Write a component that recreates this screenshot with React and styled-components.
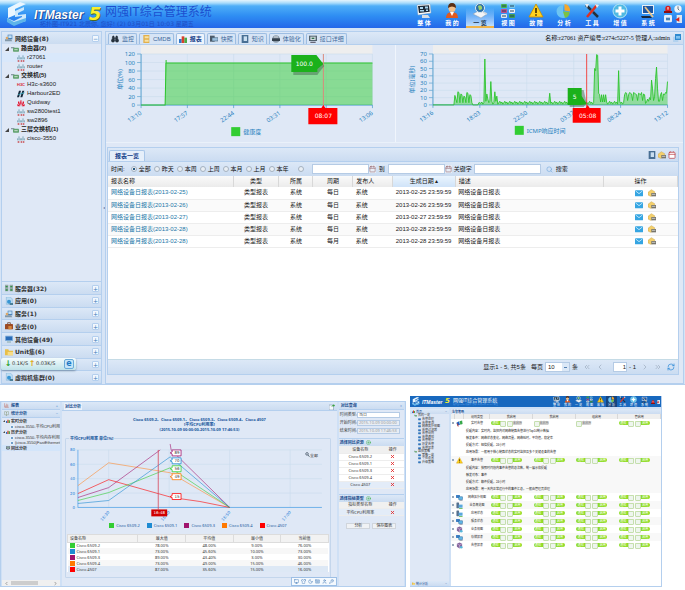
import React from "react";
import styled, { createGlobalStyle, css } from "styled-components";
import {
  Binoculars,
  BookOpen,
  Calendar,
  ChartColumn,
  ChevronLeft,
  ChevronRight,
  ChevronsLeft,
  ChevronsRight,
  CirclePlus,
  Keyboard,
  Monitor,
  Moon,
  RefreshCw,
  Search,
  Shirt,
  User,
  Wrench,
  X,
} from "lucide-react";

const devices = [
  { name: "路由器(2)", group: true },
  { name: "r27061", brand: "cisco", selected: true },
  { name: "router", brand: "cisco" },
  { name: "交换机(5)", group: true },
  { name: "H3c-s3600", brand: "h3c" },
  { name: "Harbour2ED", brand: "harbour" },
  { name: "Quidway", brand: "huawei" },
  { name: "sw2800test1", brand: "cisco" },
  { name: "sw2896", brand: "cisco" },
  { name: "三层交换机(1)", group: true },
  { name: "cisco-3550", brand: "cisco" },
];

const categories = [
  ["服务器(32)", "server"],
  ["应用(0)", "app"],
  ["服务(1)", "service"],
  ["业务(0)", "case"],
  ["其他设备(49)", "screen"],
  ["Unit集(6)", "folder"],
  ["", "folder"],
  ["虚拟机集群(0)", "app"],
];

const navItems = [
  ["整 体", "overall"],
  ["我 的", "mine"],
  ["一 览", "list"],
  ["视 图", "view"],
  ["故 障", "fault"],
  ["分 析", "analysis"],
  ["工 具", "tools"],
  ["增 值", "plus"],
  ["系 统", "system"],
];

const tabs = [
  ["监控", "watch"],
  ["CMDB", "book"],
  ["报表", "chart"],
  ["快照", "camera"],
  ["知识", "note"],
  ["体验化", "globe"],
  ["接口详细", "port"],
];

const reports = [
  ["网络设备日报表(2013-02-25)", "每日", "2013-02-25 23:59:59", "网络设备日报表"],
  ["网络设备日报表(2013-02-26)", "每日", "2013-02-26 23:59:59", "网络设备日报表"],
  ["网络设备日报表(2013-02-27)", "每日", "2013-02-27 23:59:59", "网络设备日报表"],
  ["网络设备日报表(2013-02-28)", "每日", "2013-02-28 23:59:59", "网络设备日报表"],
  ["网络设备月报表(2013-02-28)", "每月", "2013-02-28 23:59:59", "网络设备月报表"],
];

const ranges = ["全部", "昨天", "本周", "上周", "本月", "上月", "本年"];

const series = [
  { name: "Cisco 6509-2", color: "#32cd32", values: ["78.00%", "48.00%", "9.00%", "76.00%"] },
  { name: "Cisco 6509-1", color: "#1e8bd2", values: ["73.00%", "45.60%", "10.00%", "73.00%"] },
  { name: "Cisco 6509-3", color: "#a0146e", values: ["89.00%", "43.40%", "3.00%", "30.00%"] },
  { name: "Cisco 6509-4", color: "#ff7800", values: ["73.00%", "49.00%", "15.00%", "46.00%"] },
  { name: "Cisco 4507", color: "#ff0000", values: ["87.00%", "35.60%", "15.00%", "16.00%"] },
];

const alarmTree = [
  ["我的一览", 1],
  ["告警处理", 2],
  ["告警查询", 2],
  ["网络拓扑视图", 2],
  ["告警过滤器", 2],
  ["告警规则", 2],
  ["告警通知", 2],
  ["告警统计", 2],
  ["历史告警", 2],
  ["告警报表", 2],
  ["监控策略", 1],
  ["策略一览", 2],
  ["个性设置", 2],
  ["升级策略", 2],
];

const alarms = [
  {
    name: "实时告警",
    icon: "flag",
    toggles: ["gd", "d", "d", "gg"],
    lines: [
      "提醒内容：实时内，监控内对网络链路告警进行Top10统计数据",
      "触发条件：网络状态变化，网络流量，网络延时，平均值，稳定率",
      "提醒方式：短信提醒，24小时",
      "应用场景：一般用于核心链路状态的实时监控及多个关键设备的告警",
    ],
  },
  {
    name: "事件告警",
    icon: "fault",
    toggles: ["gg", "gg", "gg", "gg"],
    lines: [
      "提醒内容：按照时间段内事件告警的总次数，统一展示和提醒",
      "触发对象：事件",
      "提醒方式：邮件提醒，24小时",
      "应用场景：用一天内正常运行中的事件汇总，一般由管理员处理",
    ],
  },
  { name: "网络拓扑视图", icon: "pcs" },
  { name: "业务概览图", icon: "pc" },
  { name: "应用状态", icon: "pc" },
  { name: "服务状态", icon: "pcs" },
  { name: "业务视图", icon: "cube" },
  { name: "存储报表", icon: "pcs" },
  { name: "告警报表", icon: "cube" },
];

function NavIcon({ kind }) {
  const art = {
    overall: (
      <>
        <path d="M1 2 14 1 15 10 2 12z" fill="#fff" stroke="#9ab" strokeWidth=".5" />
        <path d="M2 3 13 2.200 13.800 8.800 3 10z" fill="#1c2a38" />
        <path d="M4 4h3v2H4zM9 3.500h3v2H9zM4 7h4v1.500H4zM10 6.500h2v1.500h-2z" fill="#a8d4ee" />
        <path d="M6 12h6l2 3H6z" fill="#d5dde5" />
      </>
    ),
    mine: (
      <>
        <path d="M2 15q0-6 6-6t6 6z" fill="#e05a20" />
        <path d="m6 9 2 4 2-4z" fill="#fff" />
        <circle cx="8" cy="5.500" r="3.500" fill="#f3c08b" />
        <path d="M4 5q0-5 4-5t4 5q-4-3-8 0" fill="#5b2e12" />
      </>
    ),
    list: (
      <>
        <path d="m1 11 7-4 7 4-6 4z" fill="#f3f5f8" stroke="#89a" strokeWidth=".5" />
        <circle cx="8" cy="5" r="4.500" fill="#2a6fa8" stroke="#dfe9ef" />
        <path d="M6 3q3-2 4 1t-3 3z" fill="#9bd06b" />
        <path d="m11 9 4 2" stroke="#cfd7de" strokeWidth="1.500" />
      </>
    ),
    view: (
      <>
        <rect x="1" y="1" width="6" height="4" rx="1" fill="#4cb350" />
        <rect x="9" y="1" width="6" height="4" rx="1" fill="#78c7ea" />
        <rect x="1" y="6" width="6" height="4" rx="1" fill="#c0518d" />
        <rect x="9" y="6" width="6" height="4" rx="1" fill="#eef3f7" />
        <rect x="1" y="11" width="6" height="4" rx="1" fill="#dce8f2" />
        <rect x="9" y="11" width="6" height="4" rx="1" fill="#3e9d55" />
        <path d="M2 3h4M10 3h4M2 8h4M10 8h4M2 13h4M10 13h4" stroke="#24455e" strokeWidth="1" />
      </>
    ),
    fault: (
      <>
        <path d="M8 1 15 14H1z" fill="#ffd21c" stroke="#c98b00" strokeWidth=".8" strokeLinejoin="round" />
        <path d="M8 5v5M8 11.300v1.500" stroke="#3a2a00" strokeWidth="1.600" />
      </>
    ),
    analysis: (
      <>
        <path d="M7 2a6.500 6.500 0 1 0 6.500 7L7 8.500z" fill="#6cc4f2" />
        <path d="M8.500 1v6.500l5.500 1q.5-6.500-5.500-7.500" fill="#f6a72b" />
        <path d="m7 8.500 6.500.5a6 6 0 0 1-4.500 6z" fill="#7cc242" />
      </>
    ),
    tools: (
      <>
        <path d="m2 2 5 5M9 9l5 5" stroke="#26313c" strokeWidth="2.500" />
        <path d="M13 2 3 14" stroke="#e03120" strokeWidth="2.500" />
        <path d="M1 1h4L3 5zM11 1l4 1-2 3z" fill="#e5ecf2" />
      </>
    ),
    plus: (
      <>
        <circle cx="8" cy="8" r="7" fill="#4fb9e3" stroke="#b5e4f6" />
        <path d="M8 3.500v9M3.500 8h9" stroke="#fff" strokeWidth="3" />
      </>
    ),
    system: (
      <>
        <path d="M2 2h12v9H2z" fill="#e8eef4" />
        <path d="M3 3h10v7H3z" fill="#1c57a5" />
        <path d="m5 4 8 10" stroke="#e8c489" strokeWidth="1.800" />
        <path d="M1 13h9l2 2H2z" fill="#17263a" />
      </>
    ),
    flag: (
      <>
        <path d="m1 6 6-3 2 8-6 2z" fill="#1d5fc0" />
        <path d="m8 3 6-2 1 8-5 2z" fill="#36a84a" />
        <path d="m3 8 2 7" stroke="#d23b2a" strokeWidth="2" />
      </>
    ),
    pcs: (
      <>
        <rect x="0" y="2" width="9" height="7" rx="1" fill="#3c7fc4" />
        <rect x="6" y="6" width="9" height="7" rx="1" fill="#5fb6e6" stroke="#285a8f" />
        <path d="M8 15h7" stroke="#789" strokeWidth="1.500" />
      </>
    ),
    pc: (
      <>
        <rect x="1" y="1" width="6" height="13" rx="1" fill="#56718f" />
        <rect x="6" y="6" width="9" height="7" fill="#58a7dd" />
        <path d="M7 15h8" stroke="#5bb84c" strokeWidth="2" />
      </>
    ),
    cube: (
      <>
        <path d="m2 4 6-3 6 3v7l-6 4-6-4z" fill="#86679f" />
        <path d="m2 4 6 3 6-3M8 7v8" stroke="#e9cfe8" fill="none" />
        <circle cx="12" cy="12" r="3" fill="#56b6da" />
      </>
    ),
  };
  return <svg viewBox="0 0 16 16" aria-hidden="true">{art[kind]}</svg>;
}

function SmallIcon({ kind }) {
  const art = {
    cisco: (
      <>
        <path d="M1 5v3M3 2v6M5 5v3M7 5v3M9 2v6M11 5v3" stroke="#4e8a9a" strokeWidth="1" />
        <path d="M1 10.500h2M4 10.500h1M6 10.500h2M9 10.500h2" stroke="#c8484e" strokeWidth="2" />
      </>
    ),
    harbour: (
      <>
        <path d="M3 1h3L3 11H0zM8 1h3L8 11H5z" fill="#16283a" />
        <path d="m2 7 9-3" stroke="#3ca4b5" strokeWidth="1.500" />
      </>
    ),
    huawei: (
      <path d="M6 10Q3 4 5 1q1 3 1 9Q7 4 7 1q2 3-1 9M5 10Q0 7 2 3q2 2 3 7m2 0q5-3 3-7-2 2-3 7M5 11H1l-1-3q3 0 5 3m2 0h4l1-3q-3 0-5 3" fill="#e3122d" />
    ),
    router: (
      <>
        <path d="M0 3h5v2H0z" fill="#8a9ba4" />
        <rect x="3" y="4" width="9" height="6" rx="1" fill="#62a26f" />
        <path d="M5 7h5" stroke="#fff" />
      </>
    ),
    server: (
      <>
        <path d="M0 1h5v10H0zM7 1h5v10H7z" fill="#98aaa8" />
        <path d="M1 4h3M8 4h3M1 9h3M8 9h3" stroke="#2f8f4a" strokeWidth="2" />
      </>
    ),
    app: (
      <>
        <path d="M2 0h6l3 3v8H2z" fill="#bcdcf2" stroke="#6fa7ce" strokeWidth=".6" />
        <circle cx="6" cy="7" r="3" fill="#3796d4" />
        <path d="M7 9h5v3H7z" fill="#4a7f99" />
      </>
    ),
    service: (
      <>
        <path d="M4 1h7v7H4z" fill="#4c82b8" />
        <path d="M5 2h5v4H5z" fill="#bfe0f6" />
        <path d="M0 8h9l2 3H0z" fill="#8398a8" />
        <circle cx="3" cy="6" r="2" fill="#dca86a" />
      </>
    ),
    case: (
      <>
        <path d="M4 3V1h4v2" fill="none" stroke="#5d2c14" />
        <rect x="0" y="3" width="12" height="8" rx="1" fill="#9b4a24" />
        <path d="M5 6h5v5H5z" fill="#d5873c" />
      </>
    ),
    screen: (
      <>
        <rect x="0" y="1" width="12" height="8" rx="1" fill="#7aa9d8" />
        <path d="M1.500 2.500h9v5h-9z" fill="#2a6cb8" />
        <path d="M3 10.500h6" stroke="#8aa" strokeWidth="1.500" />
      </>
    ),
    folder: (
      <>
        <path d="M0 2h5l1 2h6v7H0z" fill="#e8bf4a" />
        <path d="M4 6h8v5H4z" fill="#f7dd88" />
      </>
    ),
    camera: (
      <>
        <path d="M0 1h7v9H0z" fill="#4c5a68" />
        <path d="M3 4h9v5H3z" fill="#9cc0dd" stroke="#3a5670" strokeWidth=".8" />
      </>
    ),
    note: (
      <>
        <path d="M1 0h10v12H1z" fill="#486f94" />
        <path d="M4 2h5v7H4z" fill="#c9def0" />
      </>
    ),
    globe: (
      <>
        <circle cx="6" cy="6" r="5.500" fill="#8b9aa8" />
        <path d="M0 5h12v4H0z" fill="#35414d" />
        <path d="M3 3h6" stroke="#fff" />
      </>
    ),
    port: (
      <>
        <path d="M0 1h12v8H0z" fill="#52626e" />
        <path d="M2 2.500h8v5H2z" fill="#cfdcdf" />
        <path d="M4 4h4v2H4z" fill="#356e4f" />
        <path d="M2 11h8" stroke="#667" strokeWidth="2" />
      </>
    ),
    book: (
      <>
        <path d="M2 0h9v12H2z" fill="#e2b04c" />
        <path d="M4 2h6v3H4zM4 7h6v3H4z" fill="#f8e2a4" />
      </>
    ),
    chart: (
      <>
        <path d="M0 6h4v6H0z" fill="#2f78c9" />
        <path d="M4 2h4v10H4z" fill="#d9402b" />
        <path d="M8 4h4v8H8z" fill="#4da846" />
      </>
    ),
    mail: (
      <>
        <rect x="0" y="2" width="12" height="9" rx="1" fill="#35a5e2" />
        <path d="m1 3 5 4 5-4" fill="none" stroke="#d9f1ff" strokeWidth="1.200" />
      </>
    ),
    pack: (
      <>
        <path d="m0 5 5-4 5 3v5l-6 2-4-2z" fill="#f3cf6b" stroke="#c39a34" strokeWidth=".6" />
        <path d="M5 6h7v5H5z" fill="#77756c" />
        <path d="M6 8h5" stroke="#eee" />
      </>
    ),
    windows: (
      <>
        <path d="M0 4h8v8H0z" fill="#b3d2ef" />
        <path d="M3 0h9v9H3z" fill="#2f8ad0" />
        <path d="M4.500 3h6v4h-6z" fill="#7fc2f0" />
      </>
    ),
    alarm: (
      <>
        <path d="M2 9V5q0-4 4-4t4 4v4z" fill="#d81e1e" />
        <path d="M0 9h12v3H0z" fill="#8b1010" />
        <path d="M6 3v4" stroke="#fff" strokeWidth="1.500" />
      </>
    ),
    clock: (
      <>
        <circle cx="6" cy="6" r="5.500" fill="#eef4fa" />
        <path d="M6 2v4l2 2" fill="none" stroke="#456" strokeWidth="1.200" />
      </>
    ),
    note2: (
      <>
        <rect width="12" height="11" rx="2" fill="#e6f0fa" />
        <path d="M3 4h6v4H3z" fill="#4682b8" />
      </>
    ),
    exit: (
      <>
        <path d="M4 0h8v12H4z" fill="#dfe6ee" />
        <path d="M8 3v7L2 7z" fill="#d6201b" />
      </>
    ),
    exportSheet: (
      <>
        <path d="M0 2h9v10H0z" fill="#f4f8fb" stroke="#6c8aa5" />
        <path d="M5 6q0-4 4-4V0l3 3-3 3V4Q7 4 5 6" fill="#36a03c" />
      </>
    ),
  };
  if (kind === "h3c") return <H3c>H3C</H3c>;
  return <svg viewBox="0 0 12 12" aria-hidden="true">{art[kind]}</svg>;
}

function LogoMark() {
  return (
    <svg viewBox="0 0 22 24" aria-hidden="true">
      <path d="M2 6 14 0l6 2-11 5v6l-7 3z" fill="#eaf6ff" />
      <path d="m9 9 9-4v3l-6 3v2l8-1v7L7 23l-6-4v-3l7 3 8-4v-1l-7 1z" fill="#cde8fb" />
      <path d="m1 16 7 4 12-4v3L8 24l-7-4z" fill="#5db4ea" />
    </svg>
  );
}

function Axis({ x0, x1, y0, y1, ticks, times, unit, hidden }) {
  const step = (x1 - x0) / (times.length - 1);
  return (
    <g>
      <rect x={x0} y="0" width={x1 - x0} height={y1} fill="#eeeeee" />
      {ticks.map((tick, i) => {
        const y = y1 + ((y0 - y1) / (ticks.length - 1)) * i;
        return (
          <g key={tick}>
            <path d={`M${x0} ${y}H${x1}`} stroke="#c9dced" strokeWidth=".6" />
            <path d={`M${x0 - 4} ${y}H${x0}`} stroke="#5aa2cf" strokeWidth=".7" />
            <AxisText x={x0 - 6} y={y + 2} textAnchor="end">{tick}</AxisText>
          </g>
        );
      })}
      {times.map((time, i) => {
        const x = x0 + step * i;
        return (
          <g key={time}>
            <path d={`M${x} ${y1}V${y0}`} stroke="#c9dced" strokeWidth=".6" />
            <path d={`M${x} ${y0}v3`} stroke="#5aa2cf" strokeWidth=".8" />
            {i !== hidden && (
              <AxisText textAnchor="end" transform={`translate(${x + 1} ${y0 + 9}) rotate(-34)`}>
                {time}
              </AxisText>
            )}
          </g>
        );
      })}
      <path d={`M${x0} ${y1}V${y0}H${x1}`} fill="none" stroke="#3f94c8" strokeWidth=".8" />
      <AxisText textAnchor="middle" transform={`translate(${x0 - 19} ${(y0 + y1) / 2}) rotate(-90)`}>
        {unit}
      </AxisText>
    </g>
  );
}

function HealthChart() {
  return (
    <ChartSvg viewBox="0 0 288 97" role="img" aria-label="健康度">
      <Axis
        x0={35} x1={266} y0={60} y1={9}
        ticks={[120, 100, 80, 60, 40, 20, 0]}
        times={["13:10", "17:57", "22:44", "03:31", "08:18", "13:06"]}
        unit="单位(%)" hidden={4}
      />
      <path d="M59 60V18H266V60z" fill="#32cd32" fillOpacity=".5" />
      <path d="M35 60H59L60 15V18H266" fill="none" stroke="#2cc42c" />
      <path d="M217 9v54" stroke="#d98a7c" />
      <path d="M187 12h24l7 9-5 6-2 3h-24z" fill="#456b50" fillOpacity=".5" />
      <path d="M185 10h25l7 9-6 5v3h-26z" fill="#1bb11b" />
      <TipText x="198" y="21">100.0</TipText>
      <path d="M202 63h13l2-3 2 3h12v16h-29z" fill="#ff0000" />
      <TipText x="217" y="73">08:07</TipText>
      <rect x="125" y="82" width="9" height="9" fill="#32cd32" />
      <AxisText x="137" y="89">健康度</AxisText>
    </ChartSvg>
  );
}

// peaks by sample index, everything else is low jitter
const peaks = { 23: 8, 47: 3, 52: 63, 53: 5, 54: 15, 55: 8, 58: 32, 59: 5, 62: 18, 63: 5, 64: 12, 117: 16, 162: 50, 163: 47, 164: 69, 165: 68, 166: 16, 186: 47, 219: 34, 220: 22, 223: 36, 224: 52, 225: 22, 226: 5, 235: 32 };
const icmp = Array.from({ length: 236 }, (_, i) => {
  if (peaks[i]) return peaks[i];
  if (i < 22 || (i > 39 && i < 46)) return 0;
  if (i < 40) return i % 3 === 0 ? 3 : 11 + ((i * 7) % 8);
  if ((i > 191 && i < 213) || i > 227) return i % 5 === 0 ? 6 : 14 + ((i * 3) % 4);
  if (i > 214 && i < 227) return 5 + ((i * 5) % 8);
  if (i > 166 && i < 174) return i % 2 ? 14 : 4;
  return 1 + ((i * 7) % 5);
});
const icmpLine = icmp.map((v, i) => `${37 + i} ${60 - v * 0.73}`).join("L");

function IcmpChart() {
  return (
    <ChartSvg viewBox="0 0 288 97" role="img" aria-label="ICMP响应时间">
      <Axis
        x0={37} x1={272} y0={60} y1={9}
        ticks={[70, 60, 50, 40, 30, 20, 10, 0]}
        times={["13:16", "18:03", "22:50", "03:37", "08:24", "13:12"]}
        unit="单位(毫秒)"
      />
      <path d={`M37 60L${icmpLine}V60z`} fill="#32cd32" fillOpacity=".45" />
      <path d={`M${icmpLine}`} fill="none" stroke="#2cc42c" strokeWidth=".9" />
      <path d="M191 9v54" stroke="#f04a48" />
      <path d="M174 45h14l3 13-3 4h-14z" fill="#456b50" fillOpacity=".5" />
      <path d="M172 43h14v8l5 8-6 1h-13z" fill="#1bb11b" />
      <TipText x="179" y="54">5</TipText>
      <path d="M177 63h13l2-3 2 3h11v15h-28z" fill="#ff0000" />
      <TipText x="192" y="73">05:08</TipText>
      <rect x="119" y="81" width="9" height="9" fill="#32cd32" />
      <AxisText x="131" y="88">ICMP响应时间</AxisText>
    </ChartSvg>
  );
}

function CompareChart() {
  const marks = [
    ["89", 9, "#a0146e"],
    ["70", 17, "#1e8bd2"],
    ["56", 25, "#32cd32"],
    ["49", 33, "#ff7800"],
    ["15", 53, "#ff0000"],
  ];
  return (
    <ChartSvg viewBox="0 0 264 80" role="img" aria-label="平均CPU利用率">
      {[80, 60, 40, 20, 0].map((tick, i) => (
        <g key={tick}>
          <path d={`M9 ${9 + i * 14.5}H257`} stroke="#c9dced" strokeWidth=".6" />
          <TinyAxis x="8" y={10.5 + i * 14.5} textAnchor="end">{tick}</TinyAxis>
        </g>
      ))}
      {["16:30", "16:40", "16:50", "17:00"].map((time, i) => (
        <g key={time}>
          <path d={`M${42 + i * 61} 9V67`} stroke="#c9dced" strokeWidth=".6" />
          <TinyAxis textAnchor="end" transform={`translate(${43 + i * 61} 72) rotate(-50)`}>{time}</TinyAxis>
        </g>
      ))}
      <path d="M11 9V67H257" fill="none" stroke="#5aa5e8" strokeWidth=".8" />
      <g fill="none" strokeWidth=".6">
        <path d="M11 45 42 22 104 32 164 67" stroke="#ff8a30" />
        <path d="M11 57 42 47 94 9M104 3l1 6 59 58" stroke="#a0146e" />
        <path d="M11 53 42 39 106 57 134 61 164 67" stroke="#ff0000" />
        <path d="M11 60 42 52 104 27 164 67" stroke="#32cd32" />
        <path d="M11 63 42 60 104 16 164 67" stroke="#1e8bd2" />
      </g>
      <path d="M92 9v60" stroke="#d6455a" strokeWidth=".8" />
      <rect x="85" y="69" width="16" height="7" fill="#d00000" />
      <TinyTip x="93" y="74">16:48</TinyTip>
      {marks.map(([label, y, color]) => (
        <g key={label}>
          <path d={`M106 ${y}h9v6h-9v-2l-2-1 2-1z`} fill="#fff" stroke={color} strokeWidth=".8" />
          <MarkText x="111" y={y + 4}>{label}</MarkText>
        </g>
      ))}
      <g fill="none" stroke="#345" strokeWidth=".7">
        <circle cx="242" cy="13" r="1.300" />
        <path d="m243 14 1.500 2" />
      </g>
      <MarkText x="249" y="16">全部</MarkText>
    </ChartSvg>
  );
}

function DeviceSidebar() {
  return (
    <Sidebar>
      <PanelHead>
        <SmallIcon kind="service" />
        <b>网络设备(8)</b>
        <Toggle type="button" aria-label="收起">−</Toggle>
      </PanelHead>
      <Tree>
        {devices.map((item) => (
          <TreeRow key={item.name} $group={item.group} $selected={item.selected}>
            {item.group && <Caret />}
            <SmallIcon kind={item.group ? "router" : item.brand} />
            <span>{item.name}</span>
          </TreeRow>
        ))}
      </Tree>
      <Accordion>
        {categories.map(([name, icon], i) => (
          <AccordionRow key={i}>
            <SmallIcon kind={icon} />
            <b>{name}</b>
            <Toggle type="button" aria-label="展开">+</Toggle>
            {!name && (
              <Traffic>
                <Arrow $color="#2aa02a">↓</Arrow>0.1K/S
                <Arrow $color="#e0a818">↑</Arrow>0.03K/S
                <Browser>e</Browser>
              </Traffic>
            )}
          </AccordionRow>
        ))}
      </Accordion>
    </Sidebar>
  );
}

function ReportPanel() {
  return (
    <Report>
      <ReportHead>
        <ReportTab type="button">报表一览</ReportTab>
        <HeadIcons>
          <SmallIcon kind="note" />
          <SmallIcon kind="pack" />
          <Calendar color="#b8323a" fill="#fff" />
        </HeadIcons>
      </ReportHead>
      <Filters>
        <span>时间:</span>
        <RangeGroup>
          {ranges.map((range, i) => (
            <label key={range}>
              <Radio name="range" defaultChecked={i === 0} />
              {range}
            </label>
          ))}
        </RangeGroup>
        <Radio name="range" aria-label="自定义" />
        <DateBox>
          <input aria-label="开始日期" />
          <Calendar />
        </DateBox>
        <span>到</span>
        <DateBox>
          <input aria-label="结束日期" />
          <Calendar />
        </DateBox>
        <Keyword>
          关键字
          <input />
        </Keyword>
        <SearchButton type="button">
          <Search />
          搜索
        </SearchButton>
      </Filters>
      <ReportBody>
        <ReportTable>
          <colgroup>
            <col style={{ width: "22%" }} />
            <col style={{ width: "8%" }} />
            <col style={{ width: "6%" }} />
            <col style={{ width: "7%" }} />
            <col style={{ width: "7%" }} />
            <col style={{ width: "11%" }} />
            <col style={{ width: "26%" }} />
            <col style={{ width: "13%" }} />
          </colgroup>
          <thead>
            <tr>
              <th>报表名称</th>
              <Mid as="th">类型</Mid>
              <Mid as="th">所属</Mid>
              <Mid as="th">周期</Mid>
              <th>发布人</th>
              <Sorted>生成日期 ▴</Sorted>
              <th>描述</th>
              <Mid as="th">操作</Mid>
            </tr>
          </thead>
          <tbody>
            {reports.map(([name, cycle, date, desc]) => (
              <tr key={name}>
                <td><a href="#report">{name}</a></td>
                <Mid>类型报表</Mid>
                <Mid>系统</Mid>
                <Mid>{cycle}</Mid>
                <td>系统</td>
                <td>{date}</td>
                <td>{desc}</td>
                <td>
                  <RowActions>
                    <button type="button" aria-label="发送"><SmallIcon kind="mail" /></button>
                    <button type="button" aria-label="导出"><SmallIcon kind="pack" /></button>
                  </RowActions>
                </td>
              </tr>
            ))}
          </tbody>
        </ReportTable>
      </ReportBody>
      <Pager>
        <span>显示1 - 5, 共5条</span>
        <PageSize>
          每页
          <select defaultValue="10">
            <option>10</option>
            <option>20</option>
          </select>
          条
        </PageSize>
        <PageButton type="button" aria-label="首页"><ChevronsLeft /></PageButton>
        <PageButton type="button" aria-label="上一页"><ChevronLeft /></PageButton>
        <PageNumber>
          <input defaultValue="1" aria-label="页码" />- 1
        </PageNumber>
        <PageButton type="button" aria-label="下一页"><ChevronRight /></PageButton>
        <PageButton type="button" aria-label="末页"><ChevronsRight /></PageButton>
        <PageButton type="button" aria-label="刷新" $active><RefreshCw /></PageButton>
      </Pager>
    </Report>
  );
}

function MainWindow() {
  return (
    <section>
      <Header>
        <Mark><LogoMark /></Mark>
        <Brand>
          <BrandRow>
            <Wordmark>ITMaster</Wordmark>
            <Five>5</Five>
            <SystemName>网强IT综合管理系统</SystemName>
          </BrandRow>
          <Greeting>拓扑图-IT921 北辰你, 您好! (2) 03月01日 10:03 星期五</Greeting>
        </Brand>
        <Nav>
          {navItems.map(([label, icon]) => (
            <NavItem key={icon} href={`#${icon}`} $active={icon === "list"}>
              <NavIcon kind={icon} />
              {label}
            </NavItem>
          ))}
        </Nav>
        <Corner>
          <SmallIcon kind="alarm" />
          <SmallIcon kind="clock" />
          <SmallIcon kind="note2" />
          <SmallIcon kind="exit" />
        </Corner>
      </Header>
      <Workspace>
        <DeviceSidebar />
        <Collapse type="button" aria-label="收起侧栏">◂</Collapse>
        <Content>
          <TabStrip>
            {tabs.map(([label, icon]) => (
              <Tab key={label} type="button" $active={label === "报表"}>
                {icon === "watch" ? <Binoculars color="#26323e" fill="#26323e" /> : <SmallIcon kind={icon} />}
                {label}
              </Tab>
            ))}
            <DeviceInfo>
              名称:r27061 资产编号:r274c5227-5 管理人:admin
              <SmallIcon kind="windows" />
            </DeviceInfo>
          </TabStrip>
          <Charts>
            <HealthChart />
            <IcmpChart />
          </Charts>
          <ReportPanel />
        </Content>
      </Workspace>
    </section>
  );
}

function AnalysisWindow() {
  return (
    <Analysis>
      <AnalysisSide>
        <MiniHead><ChartColumn color="#c0503a" /><b>报表</b><i>+</i></MiniHead>
        <MiniHead><BookOpen color="#7f8f66" /><b>统计分析</b><i>−</i></MiniHead>
        <MiniTree>
          <MiniRow $group><Caret $small /><SmallIcon kind="chart" />实时分析</MiniRow>
          <MiniRow><SmallIcon kind="note2" />cisco-3550-平均CPU利用率</MiniRow>
          <MiniRow $group><Caret $small /><SmallIcon kind="chart" />历史分析</MiniRow>
          <MiniRow><SmallIcon kind="note2" />cisco-3550-平均内存利用率</MiniRow>
          <MiniRow><SmallIcon kind="note2" />(cisco-3550)FastEthernet0/1</MiniRow>
          <MiniRow $group $selected><Gap /><SmallIcon kind="port" />同比分析</MiniRow>
        </MiniTree>
        <ScrollBar><ChevronLeft /><Thumb /><ChevronRight /></ScrollBar>
      </AnalysisSide>
      <AnalysisMain>
        <MiniTabs>
          <button type="button">对比分析</button>
          <SmallIcon kind="exportSheet" />
        </MiniTabs>
        <ChartTitle>
          Cisco 6509-2、Cisco 6509-1、Cisco 6509-3、Cisco 6509-4、Cisco 4507
          <br />
          [平均CPU利用率]
          <br />
          (2015-10-09 00:00:00-2015-10-09 17:46:53)
        </ChartTitle>
        <ChartBox>
          <legend>平均CPU利用率 单位[%]</legend>
          <CompareChart />
          <Legend>
            {series.map((s) => (
              <span key={s.name}><Swatch $color={s.color} />{s.name}</span>
            ))}
          </Legend>
          <StatTable>
            <thead>
              <tr><th>设备名称</th><th>最大值</th><th>平均值</th><th>最小值</th><th>当前值</th></tr>
            </thead>
            <tbody>
              {series.map((s) => (
                <tr key={s.name}>
                  <td><Swatch $color={s.color} />{s.name}</td>
                  {s.values.map((v, i) => <td key={i}>{v}</td>)}
                </tr>
              ))}
            </tbody>
          </StatTable>
        </ChartBox>
        <ImeBar>
          <Monitor /><Shirt /><Moon /><Keyboard /><User /><Wrench />
        </ImeBar>
      </AnalysisMain>
      <QuerySide>
        <MiniHead><b>对比查询</b><i>»</i></MiniHead>
        <QueryForm>
          <label>时间类型:<select><option>当日</option></select></label>
          <label>开始时间:<input disabled defaultValue="2015-10-09 00:00:00" /></label>
          <label>结束时间:<input disabled defaultValue="2015-10-09 17:46:53" /></label>
        </QueryForm>
        <SectionHead>选择同比资源 <CirclePlus /></SectionHead>
        <PickTable>
          <thead><tr><th>设备名称</th><th>操作</th></tr></thead>
          <tbody>
            {series.map((s) => (
              <tr key={s.name}>
                <td>{s.name}</td>
                <td><button type="button" aria-label="删除"><X /></button></td>
              </tr>
            ))}
          </tbody>
        </PickTable>
        <SectionHead>选择指标类型 <CirclePlus /></SectionHead>
        <PickTable>
          <thead><tr><th>指标类型名称</th><th>操作</th></tr></thead>
          <tbody>
            <tr>
              <td>平均CPU利用率</td>
              <td><button type="button" aria-label="删除"><X /></button></td>
            </tr>
          </tbody>
        </PickTable>
        <FormButtons>
          <button type="button">分析</button>
          <button type="button">保存图表</button>
        </FormButtons>
      </QuerySide>
    </Analysis>
  );
}

function Switches({ kinds }) {
  return (
    <SwitchPair>
      {kinds.split("").map((k, i) => (
        <Switch key={i} type="button" $on={k === "g"} $flip={i === 1 || kinds === "d"}>
          <span>{k === "g" ? (i ? "启用" : "通知") : "未启用"}</span>
        </Switch>
      ))}
    </SwitchPair>
  );
}

function AlarmWindow() {
  return (
    <Alarm>
      <AlarmHeader>
        <MiniMark><LogoMark /></MiniMark>
        <MiniWordmark>ITMaster</MiniWordmark>
        <MiniFive>5</MiniFive>
        <AlarmName>网强IT综合管理系统<small>拓扑图-IT921 北辰你, 您好! 10月09日 17:46 星期五</small></AlarmName>
        <MiniNav>
          {navItems.map(([label, icon]) => (
            <a key={icon} href={`#mini-${icon}`}><NavIcon kind={icon} />{label}</a>
          ))}
        </MiniNav>
        <MiniCorner>
          <SmallIcon kind="alarm" />
          <SmallIcon kind="exit" />
        </MiniCorner>
      </AlarmHeader>
      <AlarmBody>
        <AlarmSide>
          <AlarmHead><SmallIcon kind="chart" />首页<i>−</i></AlarmHead>
          <AlarmTree>
            {alarmTree.map(([name, level]) => (
              <AlarmNode key={name} $level={level}>
                <SmallIcon kind={level === 1 ? "router" : "screen"} />
                {name}
              </AlarmNode>
            ))}
          </AlarmTree>
          <AlarmHead><SmallIcon kind="folder" />统计分析<i>−</i></AlarmHead>
        </AlarmSide>
        <AlarmMain>
          <AlarmTabs><button type="button">告警策略</button></AlarmTabs>
          <AlarmTable>
            <thead>
              <tr><th /><th /><th>规则类型</th><th>我启用</th><th>我启用</th><th>组启用</th><th>管启用</th></tr>
            </thead>
            {alarms.map((row) => (
              <tbody key={row.name}>
                <tr>
                  <td><input type="checkbox" aria-label={row.name} /></td>
                  <td><NavIcon kind={row.icon} /></td>
                  <td>{row.name}</td>
                  {(row.toggles || ["gg", "gg", "gg", "gg"]).map((kinds, i) => (
                    <td key={i}><Switches kinds={kinds} /></td>
                  ))}
                </tr>
                {row.lines && (
                  <tr>
                    <td />
                    <td />
                    <Details colSpan={5}>
                      {row.lines.map((line) => <p key={line}>{line}</p>)}
                    </Details>
                  </tr>
                )}
              </tbody>
            ))}
          </AlarmTable>
        </AlarmMain>
      </AlarmBody>
    </Alarm>
  );
}

export default function App() {
  return (
    <>
      <GlobalStyle />
      <MainWindow />
      <Bottom>
        <AnalysisWindow />
        <AlarmWindow />
      </Bottom>
    </>
  );
}

const line = "#b4cfee";
const bar = "linear-gradient(#dce8f7, #cbdcf1)";

const GlobalStyle = createGlobalStyle`
  * {
    box-sizing: border-box;
  }
  body {
    margin: 0;
    background: #fff;
    color: #333;
    font: 6px/9px "Liberation Sans", "Noto Sans CJK SC", sans-serif;
    white-space: nowrap;
  }
  button, input, select {
    font: inherit;
    color: inherit;
    padding: 0;
    margin: 0;
    border: 0;
    background: none;
    border-radius: 0;
    line-height: inherit;
  }
  select {
    appearance: none;
  }
  a {
    color: inherit;
    text-decoration: none;
  }
  svg {
    display: block;
    flex: none;
  }
  i {
    font-style: normal;
  }
`;

const Header = styled.header`
  display: flex;
  height: 28px;
  padding-left: 6px;
  background: linear-gradient(#e4f4fd 0, #a9dcfb 3px, #4eaef8 6px, #2e8df3 16px, #2467e9 28px);
`;

const Mark = styled.div`
  width: 22px;
  padding-top: 2px;
`;

const Brand = styled.div`
  padding: 4px 0 0 6px;
`;

const BrandRow = styled.div`
  display: flex;
  height: 16px;
`;

const Wordmark = styled.b`
  width: 51px;
  padding-top: 5px;
  color: #fff;
  font: italic bold 12px/12px "Liberation Sans", sans-serif;
  text-shadow: 0 0 1px #123a7a, 1px 1px 0 #1c4ea6;
`;

const Five = styled.b`
  width: 20px;
  color: #f9ee2e;
  text-align: center;
  font: italic bold 18px/19px "DejaVu Sans", sans-serif;
  text-shadow: 1px 1px 0 #4a6a1e;
`;

const SystemName = styled.span`
  color: #1c4fd0;
  font-size: 12px;
  line-height: 16px;
`;

const Greeting = styled.div`
  height: 7px;
  padding-left: 6px;
  color: #1f4fc4;
  line-height: 7px;
  font-family: "DejaVu Sans", "Noto Sans CJK SC", sans-serif;
`;

const Nav = styled.nav`
  display: flex;
  margin-left: auto;
`;

const NavItem = styled.a`
  display: flex;
  flex-direction: column;
  align-items: center;
  width: 28px;
  padding-top: 3px;
  color: #fff;
  font-weight: bold;
  line-height: 8px;
  ${(p) => p.$active && css`
    background: linear-gradient(#ffffff00 30%, #bfe0ff);
    border-bottom: 2px solid #f0b44a;
    color: #23384e;
  `}

  svg {
    width: 16px;
    height: 16px;
  }
`;

const Corner = styled.div`
  display: grid;
  grid-template-columns: 8px 8px;
  gap: 2px;
  align-content: center;
  padding: 0 3px 0 2px;

  svg {
    height: 8px;
  }
`;

const Workspace = styled.div`
  display: flex;
  padding: 3px 1px 0 1px;
  background: #d6e4f6;
  border-bottom: 1px solid ${line};
`;

const Sidebar = styled.aside`
  display: flex;
  flex-direction: column;
  width: 101px;
  flex: none;
  border: 1px solid ${line};
  background: #dfe8f6;
`;

const PanelHead = styled.div`
  display: flex;
  align-items: center;
  gap: 2px;
  height: 12px;
  padding: 0 2px 0 3px;
  background: ${bar};
  font-family: "DejaVu Sans", "Noto Sans CJK SC", sans-serif;

  svg {
    width: 8px;
    height: 8px;
  }
`;

const Toggle = styled.button`
  margin-left: auto;
  width: 7px;
  height: 7px;
  border: 1px solid #b4cfee;
  border-radius: 1px;
  background: #f2f8fe;
  color: #3a78b8;
  font-size: 6px;
  line-height: 5px;
`;

const Tree = styled.div`
  flex: 1;
`;

const TreeRow = styled.div`
  display: flex;
  align-items: center;
  gap: 2px;
  height: 9px;
  padding-left: ${(p) => (p.$group ? 3 : 15)}px;
  font-weight: ${(p) => (p.$group ? "bold" : "normal")};
  background: ${(p) => (p.$selected ? "#d9e8fb" : "none")};
  color: #222;

  svg {
    width: 8px;
    height: 8px;
  }
`;

const H3c = styled.b`
  color: #d8232a;
  font-size: 4px;
  width: 8px;
`;

const Caret = styled.span`
  border: ${(p) => (p.$small ? 1 : 2)}px solid #444;
  border-top-color: transparent;
  border-left-color: transparent;
`;

const Accordion = styled.div`
  display: grid;
  grid-auto-rows: 1fr;
  height: 102px;
`;

const AccordionRow = styled(PanelHead)`
  position: relative;
  height: auto;
  border-top: 1px solid ${line};
`;

const Traffic = styled.div`
  position: absolute;
  left: -1px;
  top: -1px;
  z-index: 1;
  display: flex;
  align-items: center;
  width: 75px;
  height: 12px;
  padding-left: 3px;
  border-radius: 2px;
  background: linear-gradient(#f4fcfd, #bfe2e8);
  box-shadow: 0 1px 2px #7b93ad;
  font-size: 5px;
`;

const Arrow = styled.b`
  width: 8px;
  text-align: center;
  color: ${(p) => p.$color};
  font-size: 8px;
`;

const Browser = styled.b`
  width: 10px;
  height: 10px;
  margin: 0 2px 0 auto;
  border: 1px solid #6aaad8;
  border-radius: 2px;
  background: #c5e5f8;
  color: #1d78c4;
  text-align: center;
  font-size: 8px;
  line-height: 7px;
`;

const Collapse = styled.button`
  width: 3px;
  color: #5a7ba5;
  font-size: 4px;
`;

const Content = styled.main`
  flex: 1;
  min-width: 0;
  border: 1px solid ${line};
  padding-bottom: 8px;
  background: #dfe8f6;
`;

const TabStrip = styled.div`
  display: flex;
  align-items: flex-end;
  gap: 2px;
  height: 13px;
  padding-left: 2px;
  background: ${bar};
  border-bottom: 1px solid ${line};
`;

const Tab = styled.button`
  display: flex;
  align-items: center;
  gap: 3px;
  height: 11px;
  padding: 0 2px;
  border: 1px solid #9dbde2;
  border-bottom: 0;
  border-radius: 2px 2px 0 0;
  background: ${(p) => (p.$active ? "#eef4fc" : "#d6e4f5")};
  color: ${(p) => (p.$active ? "#15428b" : "#416a9c")};
  font-weight: ${(p) => (p.$active ? "bold" : "normal")};

  svg {
    width: 8px;
    height: 8px;
  }
`;

const DeviceInfo = styled.div`
  display: flex;
  align-items: center;
  gap: 3px;
  height: 12px;
  margin-left: auto;
  padding-right: 2px;
  color: #111;
  font-family: "Liberation Serif", "Noto Sans CJK SC", serif;

  svg {
    width: 8px;
    height: 8px;
  }
`;

const Charts = styled.div`
  display: grid;
  grid-template-columns: 1fr 1fr;
  border-bottom: 1px solid #eaf1fa;

  > svg + svg {
    border-left: 1px solid #f0f5fc;
  }
`;

const ChartSvg = styled.svg`
  width: 100%;
`;

const AxisText = styled.text`
  fill: #2580bd;
  font: 6px "Noto Sans", "Noto Sans CJK SC", sans-serif;
`;

const TipText = styled.text`
  fill: #fff;
  text-anchor: middle;
  font: 6px "DejaVu Sans", sans-serif;
`;

const TinyAxis = styled.text`
  fill: #2580d8;
  font: 4px "DejaVu Sans", sans-serif;
`;

const TinyTip = styled(TipText)`
  font-size: 4px;
`;

const MarkText = styled.text`
  fill: #333;
  text-anchor: middle;
  font: 4px "DejaVu Sans", "Noto Sans CJK SC", sans-serif;
`;

const Report = styled.section`
  margin: 4px 4px 0 1px;
  border: 1px solid ${line};
  background: #fff;
`;

const ReportHead = styled.div`
  display: flex;
  align-items: flex-end;
  justify-content: space-between;
  height: 13px;
  padding: 0 2px 0 1px;
  background: ${bar};
`;

const ReportTab = styled.button`
  height: 11px;
  padding: 0 5px;
  border: 1px solid #a9c6e8;
  border-bottom: 0;
  border-radius: 2px 2px 0 0;
  background: #e6effa;
  color: #15428b;
  font-weight: bold;
`;

const HeadIcons = styled.div`
  display: flex;
  gap: 2px;
  padding-bottom: 2px;

  svg {
    width: 8px;
    height: 8px;
  }
`;

const Filters = styled.div`
  display: flex;
  align-items: center;
  height: 15px;
  padding-left: 3px;
  border-top: 1px solid ${line};
  background: ${bar};
  color: #111;

  input {
    height: 10px;
    background: #fff;
    border: 1px solid #b5cbe5;
  }
`;

const RangeGroup = styled.div`
  display: flex;
  justify-content: space-between;
  width: 158px;
  margin: 0 9px 0 6px;

  label {
    display: flex;
    align-items: center;
    gap: 2px;
  }
`;

const Radio = styled.input.attrs({ type: "radio" })`
  && {
    appearance: none;
    width: 6px;
    height: 6px;
    border: 1px solid #a5b2c0;
    border-radius: 50%;
    background: #e9eef4;
  }
  &&:checked {
    background: radial-gradient(#27587f 35%, #e9eef4 50%);
  }
`;

const DateBox = styled.div`
  display: flex;
  align-items: center;
  margin: 0 3px 0 8px;

  input {
    width: 57px;
  }
  svg {
    width: 7px;
    height: 8px;
    color: #9a6a72;
    background: #e8eef6;
  }
  span + & {
    margin: 0 2px 0 3px;
  }
`;

const Keyword = styled.label`
  display: flex;
  align-items: center;
  gap: 2px;

  input {
    width: 67px;
  }
`;

const SearchButton = styled.button`
  display: flex;
  align-items: center;
  gap: 3px;
  margin-left: 5px;

  svg {
    width: 7px;
    height: 7px;
    color: #6fa5dc;
  }
`;

const ReportBody = styled.div`
  min-height: 183px;
`;

const ReportTable = styled.table`
  width: 100%;
  table-layout: fixed;
  border-collapse: collapse;
  color: #222;

  th {
    height: 11px;
    padding: 0 3px;
    border-right: 1px solid #d8d8d8;
    background: linear-gradient(#fafafa, #ebebeb);
    font-weight: normal;
    text-align: left;
  }
  td {
    height: 12px;
    padding: 0 3px;
    border-bottom: 1px solid #ededed;
  }
  tbody tr:nth-child(even) {
    background: #fafafa;
  }
  a {
    color: #2177a8;
  }
`;

const Mid = styled.td`
  && {
    text-align: center;
  }
`;

const Sorted = styled.th`
  && {
    text-align: center;
    background: linear-gradient(#eaf4fe, #cfe3f8);
  }
`;

const RowActions = styled.div`
  display: flex;
  justify-content: center;
  gap: 5px;
  padding-left: 10px;

  svg {
    width: 8px;
    height: 8px;
  }
`;

const Pager = styled.div`
  display: flex;
  align-items: center;
  justify-content: flex-end;
  gap: 5px;
  height: 15px;
  padding-right: 3px;
  border-top: 1px solid #c5dbe6;
  background: ${bar};
  color: #222;
`;

const PageSize = styled.label`
  display: flex;
  align-items: center;
  gap: 2px;

  select {
    width: 25px;
    height: 10px;
    padding-left: 2px;
    border: 1px solid #b5cbe5;
    background: linear-gradient(#5580b0, #5580b0) right 2px center / 3px 1px no-repeat,
      linear-gradient(#dbe8f7, #dbe8f7) right / 7px 10px no-repeat, #fff;
  }
`;

const PageButton = styled.button`
  color: ${(p) => (p.$active ? "#2587d6" : "#9aa9bb")};

  svg {
    width: 8px;
    height: 8px;
  }
`;

const PageNumber = styled.div`
  display: flex;
  align-items: center;
  gap: 2px;
  padding-left: 4px;

  input {
    width: 14px;
    height: 10px;
    border: 1px solid #b5cbe5;
    background: #fff;
    text-align: right;
  }
`;

const Bottom = styled.div`
  display: flex;
  align-items: flex-end;
  gap: 4px;
  padding: 11px 23px 3px 0;
  font-size: 4px;
  line-height: 5px;
`;

const Analysis = styled.section`
  display: flex;
  flex: 405;
  min-width: 0;
  gap: 2px;
  min-height: 186px;
  padding: 0 1px;
  border: 1px solid ${line};
  background: #cfe0f5;
  font-family: "Noto Sans", "Noto Sans CJK SC", sans-serif;
`;

const AnalysisSide = styled.aside`
  display: flex;
  flex-direction: column;
  flex: 0 0 58px;
  overflow: hidden;
  background: #dfe8f6;
`;

const MiniHead = styled.div`
  display: flex;
  align-items: center;
  gap: 2px;
  height: 8px;
  padding: 0 2px;
  border-bottom: 1px solid ${line};
  background: ${bar};
  color: #15498b;

  svg {
    width: 5px;
    height: 5px;
  }
  i {
    margin-left: auto;
    color: #4a86c8;
  }
`;

const MiniTree = styled.div`
  flex: 1;
  font-family: "Liberation Sans", "Noto Sans CJK SC", sans-serif;
`;

const MiniRow = styled.div`
  display: flex;
  align-items: center;
  gap: 1px;
  height: ${(p) => (p.$group ? 6 : 5)}px;
  padding-left: ${(p) => (p.$group ? 1 : 8)}px;
  font-weight: ${(p) => (p.$group ? "bold" : "normal")};
  background: ${(p) => (p.$selected ? "#d3e5fa" : "none")};

  svg {
    width: 4px;
    height: 4px;
  }
`;

const Gap = styled.span`
  width: 2px;
`;

const ScrollBar = styled.div`
  display: flex;
  align-items: center;
  height: 6px;
  padding: 0 2px;
  background: #f0f0f0;

  svg {
    width: 5px;
    height: 5px;
  }
  svg:last-child {
    margin-left: auto;
  }
`;

const Thumb = styled.div`
  width: 27px;
  height: 4px;
  margin-left: 2px;
  background: #cdcdcd;
`;

const AnalysisMain = styled.div`
  position: relative;
  flex: 1;
  min-width: 0;
  background: #dfe8f6;
`;

const MiniTabs = styled.div`
  display: flex;
  align-items: flex-end;
  justify-content: space-between;
  height: 9px;
  padding: 0 2px;
  background: ${bar};
  border-bottom: 1px solid ${line};

  button {
    height: 7px;
    padding: 0 1px;
    border-radius: 1px 1px 0 0;
    background: #eaf2fc;
    color: #15498b;
    font-weight: bold;
  }
  svg {
    width: 6px;
    height: 6px;
  }
`;

const ChartTitle = styled.div`
  margin: 6px 0 4px;
  color: #17569c;
  font-weight: bold;
  text-align: center;
`;

const ChartBox = styled.fieldset`
  margin: 0 6px 0 3px;
  padding: 0 1px 5px;
  border: 1px solid #c4d6ec;
  border-radius: 1px;
  min-width: 0;

  legend {
    margin-left: 2px;
    padding: 0 1px;
    color: #17569c;
    font-weight: bold;
  }
`;

const Legend = styled.div`
  display: flex;
  justify-content: center;
  gap: 7px;
  height: 9px;
  align-items: center;
  color: #17569c;

  span {
    display: flex;
    align-items: center;
  }
`;

const Swatch = styled.i`
  display: inline-block;
  width: 5px;
  height: 5px;
  margin-right: 2px;
  vertical-align: top;
  background: ${(p) => p.$color};
`;

const StatTable = styled.table`
  width: 100%;
  margin-top: 4px;
  table-layout: fixed;
  border-collapse: collapse;
  background: #fff;

  th, td {
    height: 6px;
    padding: 0;
    text-align: center;
    font-weight: normal;
  }
  th {
    height: 8px;
    border: 1px solid #dcdcdc;
    background: #f2f2f2;
  }
  td:first-child, th:first-child {
    width: 27%;
    padding-left: 2px;
    text-align: left;
  }
  tbody tr:nth-child(even) {
    background: #f7f7f7;
  }
  tbody tr:last-child {
    background: #dde8f5;
  }
`;

const ImeBar = styled.div`
  position: absolute;
  right: 0;
  bottom: 0;
  display: flex;
  gap: 2px;
  padding: 1px 2px;
  border: 1px solid #9dbfe5;
  background: #f4f9fe;
  color: #2f6cb0;

  svg {
    width: 5px;
    height: 5px;
  }
`;

const QuerySide = styled.aside`
  flex: 0 0 65px;
  background: #dfe8f6;
`;

const QueryForm = styled.div`
  display: grid;
  gap: 1px;
  padding: 1px 4px 4px 1px;

  label {
    display: flex;
    align-items: center;
    justify-content: space-between;
    height: 7px;
  }
  select, input {
    width: 43px;
    height: 6px;
    padding-left: 1px;
    border: 1px solid #b5cbe5;
    background: #fff;
    line-height: 4px;
  }
  input {
    background: #e8edf4;
    color: #999;
  }
`;

const SectionHead = styled.div`
  display: flex;
  align-items: center;
  gap: 2px;
  height: 8px;
  padding-left: 1px;
  border-top: 1px solid ${line};
  background: ${bar};
  color: #15498b;
  font-weight: bold;

  svg {
    width: 5px;
    height: 5px;
    color: #35ad3c;
  }
`;

const PickTable = styled.table`
  width: 100%;
  margin-bottom: 5px;
  border-collapse: collapse;
  background: #fff;

  th, td {
    height: 7px;
    padding: 0;
    border-bottom: 1px solid #ededed;
    font-weight: normal;
    text-align: center;
  }
  th {
    background: #f0f0f0;
  }
  tbody tr:last-child {
    background: #e3ecf8;
  }
  th:first-child {
    width: 66%;
  }
  button {
    display: inline-block;
    vertical-align: top;
  }
  svg {
    width: 5px;
    height: 5px;
    color: #e32626;
    stroke-width: 4px;
  }
`;

const FormButtons = styled.div`
  display: flex;
  justify-content: center;
  gap: 2px;
  padding-top: 2px;

  button {
    min-width: 24px;
    height: 6px;
    background: #f0f2f5;
    border: 1px solid #d0d5dc;
    line-height: 4px;
  }
`;

const Alarm = styled.section`
  display: flex;
  flex-direction: column;
  flex: 253;
  min-width: 0;
  min-height: 191px;
  border-right: 1px solid ${line};
  border-bottom: 1px solid ${line};
  background: #cfe0f5;
  font-size: 3px;
  line-height: 4px;
`;

const AlarmHeader = styled.header`
  display: flex;
  align-items: center;
  height: 11px;
  padding-left: 2px;
  background: #1868be;
  color: #fff;
`;

const MiniMark = styled.div`
  width: 8px;
`;

const MiniWordmark = styled.b`
  width: 25px;
  padding-left: 2px;
  font: italic bold 5px/8px "Liberation Sans", sans-serif;
`;

const MiniFive = styled.b`
  width: 8px;
  color: #f9ee2e;
  font: italic bold 7px/9px "DejaVu Sans", sans-serif;
`;

const AlarmName = styled.div`
  font-size: 5px;
  line-height: 6px;

  small {
    display: block;
    color: #5ba0e8;
    font-size: 2px;
    line-height: 3px;
  }
`;

const MiniNav = styled.nav`
  display: flex;
  margin-left: auto;

  a {
    display: flex;
    flex-direction: column;
    align-items: center;
    width: 11px;
  }
  a:nth-child(6) {
    background: #17457f;
  }
  svg {
    width: 7px;
    height: 7px;
  }
`;

const MiniCorner = styled.div`
  display: flex;
  gap: 1px;
  padding: 0 1px;

  svg {
    width: 4px;
    height: 4px;
  }
`;

const AlarmBody = styled.div`
  display: flex;
  flex: 1;
  gap: 2px;
  padding-top: 2px;
`;

const AlarmSide = styled.aside`
  display: flex;
  flex-direction: column;
  justify-content: flex-start;
  flex: 0 0 39px;
  background: #dfe8f6;

  > :last-child {
    margin-top: auto;
  }
`;

const AlarmHead = styled.div`
  display: flex;
  align-items: center;
  gap: 1px;
  height: 5px;
  padding: 0 2px;
  background: ${bar};
  color: #15498b;

  svg {
    width: 3px;
    height: 3px;
  }
  i {
    margin-left: auto;
  }
`;

const AlarmTree = styled.div`
  display: grid;
  grid-auto-rows: 1fr;
  height: 50px;
`;

const AlarmNode = styled.div`
  display: flex;
  align-items: center;
  gap: 1px;
  padding-left: ${(p) => p.$level * 4}px;
  line-height: 3px;

  svg {
    width: 3px;
    height: 3px;
  }
`;

const AlarmMain = styled.div`
  flex: 1;
  min-width: 0;
  background: #fff;
`;

const AlarmTabs = styled.div`
  height: 5px;
  padding-left: 1px;
  background: ${bar};

  button {
    display: block;
    height: 5px;
    background: #eaf2fc;
    color: #15498b;
    font-weight: bold;
  }
`;

const AlarmTable = styled.table`
  width: 100%;
  table-layout: fixed;
  border-collapse: collapse;

  th, td {
    padding: 0;
    text-align: center;
    font-weight: normal;
  }
  th {
    height: 5px;
    background: #efefef;
    border-right: 1px solid #d8d8d8;
  }
  th:nth-child(1) {
    width: 4px;
  }
  th:nth-child(2) {
    width: 9px;
  }
  th:nth-child(3) {
    width: 26px;
  }
  td {
    height: 8px;
  }
  tbody:nth-child(odd) {
    background: #f8f8f8;
  }
  td > svg {
    width: 7px;
    height: 7px;
    margin: 0 auto;
  }
  input {
    display: block;
    appearance: none;
    width: 2px;
    height: 2px;
    margin-left: 1px;
    border: 1px solid #9ab;
  }
`;

const Details = styled.td`
  && {
    height: 29px;
    text-align: left;
    padding-left: 2px;
    color: #222;
  }

  p {
    margin: 0;
    line-height: 7px;
  }
`;

const SwitchPair = styled.div`
  display: flex;
  gap: 1px;
  padding-left: 1px;
`;

const Switch = styled.button`
  display: flex;
  flex-direction: ${(p) => (p.$flip ? "row-reverse" : "row")};
  flex: none;
  width: 15px;
  height: 4px;
  border-radius: 2px;
  background: ${(p) => (p.$on ? "#8fdc28" : "#d4d4d4")};
  color: ${(p) => (p.$on ? "#fff" : "#888")};
  line-height: 4px;

  span {
    flex: 1;
  }
  &::after {
    content: "";
    width: 4px;
    height: 4px;
    border: 1px solid #c5dfae;
    border-radius: 1px;
    background: #eef5ee;
  }
`;
